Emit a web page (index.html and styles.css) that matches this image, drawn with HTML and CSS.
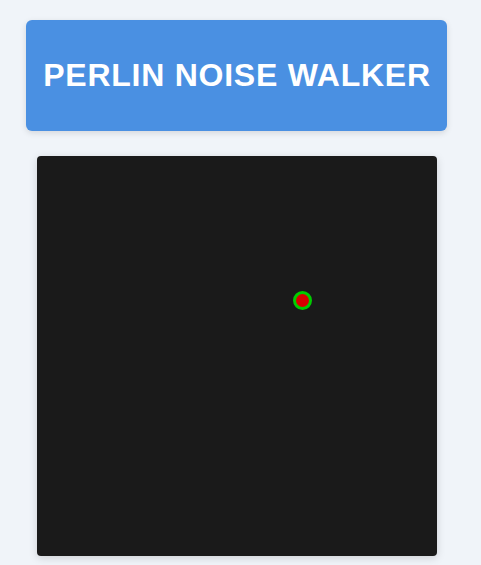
FILE: index.html
```html
<!DOCTYPE html>
<html>
<head>
<meta charset="utf-8">
<link rel="stylesheet" href="styles.css">
</head>
<body>
<div class="app">
  <h1 class="title">PERLIN NOISE WALKER</h1>
  <div class="board">
    <svg class="walker" width="400" height="400" viewBox="0 0 400 400">
      <circle cx="265.5" cy="144.5" r="8" fill="#d80000" stroke="#00cc00" stroke-width="3"/>
    </svg>
  </div>
</div>
</body>
</html>
```
FILE: styles.css
```css
html, body {
  margin: 0;
  padding: 0;
  background: #f0f4f9;
  font-family: "Liberation Sans", Arial, sans-serif;
}
.app {
  display: flex;
  flex-direction: column;
  align-items: center;
  padding: 20px 8px 0 0;
  gap: 25px;
  overflow: hidden;
  height: 545px;
}
.title {
  margin: 0;
  width: 421px;
  height: 111px;
  box-sizing: border-box;
  display: flex;
  align-items: center;
  justify-content: center;
  padding-left: 1px;
  background: #4a90e2;
  color: #fff;
  font-size: 32px;
  font-weight: bold;
  letter-spacing: 0.75px;
  border-radius: 6px;
  box-shadow: 0 2px 6px rgba(0,0,0,0.12);
}
.board {
  width: 400px;
  height: 400px;
  background: #1a1a1a;
  border-radius: 4px;
  box-shadow: 0 2px 8px rgba(0,0,0,0.15);
  flex: none;
  margin-left: 1px;
}
.walker {
  display: block;
}
```
